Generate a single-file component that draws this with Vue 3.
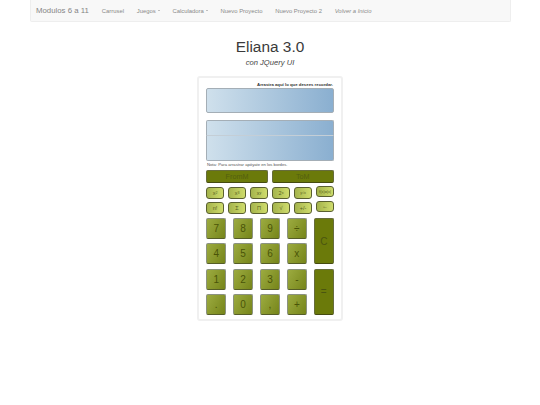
<script setup>
const links = [
  { label: 'Carrusel' },
  { label: 'Juegos', caret: true },
  { label: 'Calculadora', caret: true },
  { label: 'Nuevo Proyecto' },
  { label: 'Nuevo Proyecto 2' },
  { label: 'Volver a Inicio', italic: true }
]
const row1 = [['x', '2'], ['x', '3'], ['x', 'y'], ['2', 'x'], ['', 'y√x'], ['f(x)=|x|', '']]
const row2 = ['n!', 'Σ', 'Π', '√', '+/-', '←']
const keys = ['7', '8', '9', '÷', '4', '5', '6', 'x', '1', '2', '3', '-', '.', '0', ',', '+']
</script>

<template>
  <div class="page">
    <nav class="navbar">
      <span class="brand">Modulos 6 a 11</span>
      <span v-for="l in links" :key="l.label" class="link" :class="{ italic: l.italic }">
        {{ l.label }}<i v-if="l.caret" class="caret"></i>
      </span>
    </nav>
    <h1 class="title">Eliana 3.0</h1>
    <p class="subtitle">con JQuery UI</p>
    <section class="card">
      <div class="hint">Arrastra aquí lo que desees recordar.</div>
      <div class="screen first"></div>
      <div class="screen upper"></div>
      <div class="screen lower"></div>
      <div class="note">Nota: Para arrastrar apóyate en los bordes.</div>
      <div class="mem">
        <div class="key dark soft">FromM</div>
        <div class="key dark soft">ToM</div>
      </div>
      <div class="small-row">
        <div v-for="(k, i) in row1" :key="i" class="key small" :class="{ raised: i === 5, tiny: i === 5 }">{{ k[0] }}<sup v-if="k[1]">{{ k[1] }}</sup></div>
      </div>
      <div class="small-row second">
        <div v-for="(k, i) in row2" :key="k" class="key small" :class="{ raised: i === 5 }">{{ k }}</div>
      </div>
      <div class="pad">
        <div v-for="k in keys" :key="k" class="key big">{{ k }}</div>
        <div class="key dark clear">C</div>
        <div class="key dark equals">=</div>
      </div>
    </section>
  </div>
</template>

<style>
html, body { margin: 0; background: #fff; }
</style>

<style scoped>
.page {
  width: 540px;
  height: 405px;
  font-family: "Liberation Sans", Arial, sans-serif;
  color: #3a3a3a;
  overflow: hidden;
  display: flex;
  flex-direction: column;
  align-items: center;
}
.navbar {
  box-sizing: border-box;
  width: 481px;
  height: 22px;
  flex: none;
  display: flex;
  align-items: center;
  padding-left: 5.5px;
  background: #f8f8f8;
  border: 1px solid #eeeeee;
  border-top: 0;
  border-radius: 0 0 2px 2px;
}
.brand { font-size: 7.8px; font-weight: 400; color: #858585; margin-right: 13px; white-space: nowrap; }
.link { font-size: 5.9px; color: #8a8a8a; margin-right: 12.7px; white-space: nowrap; }
.italic { font-style: italic; }
.caret {
  display: inline-block;
  margin-left: 2px;
  vertical-align: middle;
  border-top: 1.5px solid #888;
  border-left: 1.5px solid transparent;
  border-right: 1.5px solid transparent;
}
.title {
  margin: 15px 0 0;
  font-size: 15.4px;
  line-height: 20px;
  font-weight: 400;
}
.subtitle {
  margin: 0;
  font-size: 7.6px;
  line-height: 12px;
  font-style: italic;
  color: #444;
}
.card {
  box-sizing: border-box;
  width: 146px;
  height: 245px;
  margin-top: 7px;
  padding: 3.5px 7px 0;
  background: #fff;
  border: 2px solid #f0f0f0;
  border-radius: 3px;
  flex: none;
}
.hint {
  font-size: 4.3px;
  font-weight: 700;
  line-height: 5px;
  text-align: right;
  color: #333;
  margin-bottom: 1.5px;
  padding-right: 1px;
  white-space: nowrap;
}
.screen {
  box-sizing: border-box;
  background: linear-gradient(90deg, #cfe0ec, #8aafd0);
  border: 1px solid #a4aeb6;
  border-radius: 2px;
}
.first { height: 24.5px; margin-bottom: 7px; }
.upper { height: 16.5px; border-radius: 2px 2px 0 0; border-bottom-color: #c4ced6; }
.lower { height: 25px; border-top: 0; border-radius: 0 0 2px 2px; }
.note {
  font-size: 4.2px;
  line-height: 5px;
  color: #555;
  margin: 0.5px 0 3.5px;
  padding-left: 1px;
  white-space: nowrap;
}
.key {
  box-sizing: border-box;
  display: flex;
  align-items: center;
  justify-content: center;
  border-radius: 2px;
  color: #4a5408;
}
.dark {
  background: #6b7a0a;
  border: 1px solid #666c3c;
  border-bottom-color: #454b10;
  color: #4a5510;
}
.soft { color: #535f10; }
.mem {
  display: grid;
  grid-template-columns: 62px 62.5px;
  justify-content: space-between;
  height: 13px;
  font-size: 7.2px;
}
.small-row {
  display: grid;
  grid-template-columns: repeat(6, 18px);
  justify-content: space-between;
  margin-top: 3.5px;
  height: 12px;
}
.second { margin-top: 3px; height: 12.5px; }
.small {
  background: linear-gradient(90deg, #a5b44c, #cfdc6c);
  border: 1px solid #5a6030;
  border-radius: 3px;
  font-size: 5.5px;
  color: #565f1c;
}
.small sup { font-size: 3.6px; line-height: 0; vertical-align: 2px; }
.raised { height: 11px; margin-top: -1px; }
.tiny { font-size: 3.9px; white-space: nowrap; }
.pad {
  display: grid;
  grid-template-columns: repeat(5, 20.4px);
  grid-template-rows: repeat(4, 21px);
  column-gap: 6.5px;
  row-gap: 4.33px;
  margin-top: 4px;
}
.big {
  background: linear-gradient(120deg, #9cab40, #76851a);
  border: 1px solid #8b9280;
  border-bottom-color: #565e28;
  font-size: 10px;
}
.clear { grid-column: 5; grid-row: 1 / span 2; font-size: 10px; }
.equals { grid-column: 5; grid-row: 3 / span 2; font-size: 10px; }
</style>
